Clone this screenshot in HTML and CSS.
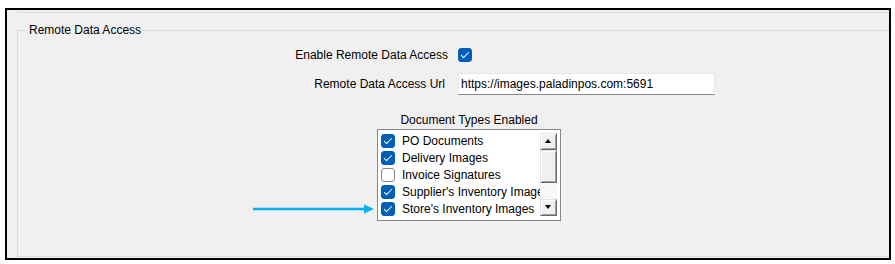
FILE: index.html
```html
<!DOCTYPE html>
<html lang="en">
<head>
  <meta charset="UTF-8" />
  <title>Remote Data Access</title>
  <link rel="stylesheet" href="styles.css">
</head>
<body>
  <div class="frame">
    <!-- 上一個群組的底邊 -->
    <div class="prev-group"></div>

    <fieldset class="group">
      <legend>Remote Data Access</legend>

      <div class="form-grid">
        <span class="field-label">Enable Remote Data Access</span>
        <span class="check checked"></span>
        <span class="field-label url-label">Remote Data Access Url</span>
        <input class="text-box" type="text" value="https://images.paladinpos.com:5691">
      </div>

      <div class="doc-types">
        <div class="doc-title">Document Types Enabled</div>
        <div class="list-box">
          <ul class="list-items">
            <li><span class="check checked"></span>PO Documents</li>
            <li><span class="check checked"></span>Delivery Images</li>
            <li><span class="check"></span>Invoice Signatures</li>
            <li><span class="check checked"></span>Supplier's Inventory Images</li>
            <li><span class="check checked"></span>Store's Inventory Images</li>
          </ul>
          <div class="scroll-bar">
            <div class="scroll-btn up"></div>
            <div class="scroll-thumb"></div>
            <div class="scroll-track"></div>
            <div class="scroll-btn down"></div>
          </div>
        </div>

        <!-- 標示箭頭 -->
        <svg class="pointer-arrow" width="122" height="10" viewBox="0 0 122 10">
          <line x1="0" y1="5" x2="113" y2="5" stroke="#00b0f0" stroke-width="2.5" />
          <polygon points="111,0.5 121,5 111,9.5" fill="#00b0f0" />
        </svg>
      </div>
    </fieldset>
  </div>
</body>
</html>
```

FILE: styles.css
```css
  body {
    margin: 0;
    background: #fff;
    font-family: 'Liberation Sans', Arial, sans-serif;
    font-size: 12px;
    color: #000;
  }

  /* 外框 */
  .frame {
    margin: 8px 0 0 5px;
    width: 886px;
    height: 252px;
    box-sizing: border-box;
    border: 2px solid #000;
    background-color: #f0f0f0;
    overflow: hidden;
  }

  .prev-group {
    margin-left: 10px;
    height: 2px;
    border-left: 1px solid #dcdcdc;
    border-bottom: 1px solid #dcdcdc;
  }

  /* 群組框 */
  .group {
    margin: 10px 0 0 10px;
    padding: 11px 0 0 0;
    width: 1000px;
    height: 234px;
    box-sizing: border-box;
    border: 1px solid #dcdcdc;
  }

  .group legend {
    margin-left: 9px;
    padding: 0 2px;
    line-height: 14px;
  }

  .form-grid {
    display: grid;
    grid-template-columns: 430px auto;
    column-gap: 10px;
    row-gap: 11px;
    align-items: center;
    justify-items: start;
  }

  .field-label {
    justify-self: end;
    line-height: 14px;
  }

  .url-label {
    padding-right: 3px;
  }

  .text-box {
    width: 257px;
    height: 22px;
    box-sizing: border-box;
    margin: 0;
    padding: 0 2px;
    border: 1px solid #e5e5e5;
    border-bottom-color: #868686;
    font-family: 'Liberation Sans', Arial, sans-serif;
    font-size: 12px;
    color: #000;
    background: #fff;
  }

  /* 核取方塊 */
  .check {
    position: relative;
    display: inline-block;
    width: 14px;
    height: 14px;
    box-sizing: border-box;
    border: 1px solid #8a8a8a;
    border-radius: 3px;
    background: #fff;
    flex-shrink: 0;
  }

  .check.checked {
    border-color: #005fb8;
    background: #005fb8;
  }

  .check.checked::after {
    content: '';
    position: absolute;
    left: 4px;
    top: 1px;
    width: 3px;
    height: 7px;
    border: solid #fff;
    border-width: 0 1.5px 1.5px 0;
    transform: rotate(45deg);
  }

  /* 文件類型清單 */
  .doc-types {
    position: relative;
    margin: 18px 0 0 359px;
    width: 184px;
  }

  .doc-title {
    text-align: center;
    line-height: 14px;
    margin-bottom: 2px;
  }

  .list-box {
    display: flex;
    height: 92px;
    box-sizing: border-box;
    border: 1px solid #828790;
    background: #fff;
  }

  .list-items {
    list-style: none;
    margin: 0;
    padding: 2px 0 0 0;
    width: 162px;
    overflow: hidden;
  }

  .list-items li {
    display: flex;
    align-items: center;
    gap: 7px;
    height: 17px;
    padding-left: 3px;
    white-space: nowrap;
  }

  .scroll-bar {
    display: flex;
    flex-direction: column;
    width: 17px;
    margin: 3px 0 4px 0;
  }

  .scroll-btn,
  .scroll-thumb {
    position: relative;
    box-sizing: border-box;
    background: #f0f0f0;
    border: 1px solid;
    border-color: #e3e3e3 #696969 #696969 #e3e3e3;
    box-shadow: inset 1px 1px #fff, inset -1px -1px #a0a0a0;
  }

  .scroll-btn {
    height: 17px;
  }

  .scroll-thumb {
    height: 33px;
  }

  .scroll-track {
    flex: 1;
    background: repeating-conic-gradient(#f0f0f0 0% 25%, #fff 0% 50%) 0 0 / 2px 2px;
  }

  .scroll-btn::after {
    content: '';
    position: absolute;
    left: 4px;
    top: 5px;
    border-left: 3.5px solid transparent;
    border-right: 3.5px solid transparent;
  }

  .scroll-btn.up::after {
    border-bottom: 4px solid #000;
  }

  .scroll-btn.down::after {
    border-top: 4px solid #000;
  }

  .pointer-arrow {
    position: absolute;
    left: -124px;
    top: 91px;
  }
```
